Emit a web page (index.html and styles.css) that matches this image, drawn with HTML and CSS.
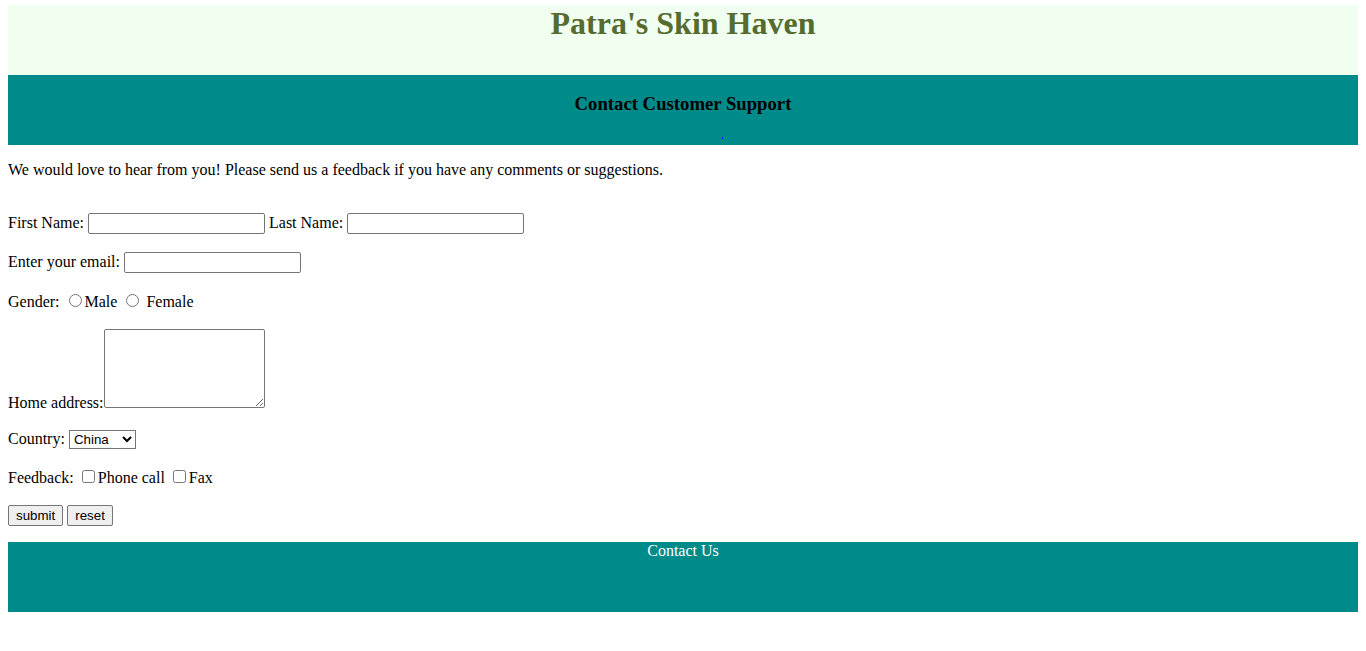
FILE: index.html
```html
<!DOCTYPE html>
<html>
<head>
<meta charset="utf-8">
<title>Patra's Skin Haven</title>
<link rel="stylesheet" href="styles.css">
</head>
<body>
<header class="site-header">
  <h1 class="brand">Patra's Skin Haven</h1>
</header>
<section class="banner">
  <h3 class="banner-title">Contact Customer Support</h3>
  <span class="banner-dot"></span>
</section>
<p class="intro">We would love to hear from you! Please send us a feedback if you have any comments or suggestions.</p>
<form class="contact-form">
  <p class="row">First Name: <input class="text-input" type="text"> Last Name: <input class="text-input" type="text"></p>
  <p class="row">Enter your email: <input class="text-input" type="email"></p>
  <p class="row row-gender">Gender: <input class="radio" type="radio" name="g">Male <input class="radio" type="radio" name="g"> Female</p>
  <p class="row row-address">Home address:<textarea class="address"></textarea></p>
  <p class="row">Country: <select class="country"><option>China</option><option>India</option><option>Japan</option></select></p>
  <p class="row">Feedback: <input class="check" type="checkbox">Phone call <input class="check" type="checkbox">Fax</p>
  <p class="btn-row"><button class="btn" type="submit">submit</button> <button class="btn" type="reset">reset</button></p>
</form>
<footer class="site-footer">Contact Us</footer>
</body>
</html>
```

FILE: styles.css
```css
body {
  margin: 5px 8px 8px;
  font-family: "Liberation Serif", "Times New Roman", serif;
  font-size: 16px;
  color: #000;
  background: #fff;
}

.site-header {
  height: 70px;
  background: #f0fff0;
  text-align: center;
}

.brand {
  margin: 0;
  font-size: 32px;
  font-weight: bold;
  color: #556b2f;
}

.banner {
  height: 70px;
  background: #008b8b;
  text-align: center;
  overflow: hidden;
  position: relative;
}

.banner-title {
  margin: 18px 0 0;
  font-size: 18.72px;
  font-weight: bold;
}

.banner-dot {
  position: absolute;
  left: 714px;
  top: 62px;
  width: 1px;
  height: 2px;
  background: #0000ee;
}

.intro {
  margin: 16px 0 32px;
}

.contact-form {
  margin: 0;
}

.row {
  margin: 16px 0;
  line-height: 23px;
}

.row-gender {
  padding-top: 2px;
  line-height: 22px;
}

.row-address {
  line-height: 16px;
}

.btn-row {
  margin: 16px 0;
  line-height: 21px;
}

.text-input {
  box-sizing: border-box;
  width: 177px;
  height: 21px;
  margin: 0;
  padding: 1px 2px;
  border: 1px solid #767676;
  border-radius: 2px;
  font-family: "Liberation Sans", Arial, sans-serif;
  font-size: 13.33px;
  vertical-align: baseline;
}

.radio {
  margin: 3px 3px 0 5px;
}

.check {
  margin: 3px 3px 3px 4px;
}

.address {
  box-sizing: border-box;
  width: 161px;
  height: 79px;
  margin: 0;
  border: 1px solid #767676;
  border-radius: 2px;
  resize: both;
  font-family: "Liberation Mono", monospace;
  font-size: 13.33px;
}

.country {
  box-sizing: border-box;
  width: 67px;
  height: 19px;
  margin: 0;
  border: 1px solid #767676;
  border-radius: 0;
  font-family: "Liberation Sans", Arial, sans-serif;
  font-size: 13.33px;
  background: #fff;
}

.btn {
  box-sizing: border-box;
  height: 21px;
  margin: 0;
  padding: 1px 7px;
  border: 1px solid #767676;
  border-radius: 2px;
  background: #efefef;
  font-family: "Liberation Sans", Arial, sans-serif;
  font-size: 13.33px;
  color: #000;
  vertical-align: top;
}

.site-footer {
  height: 70px;
  background: #008b8b;
  color: #fff;
  text-align: center;
}
```
